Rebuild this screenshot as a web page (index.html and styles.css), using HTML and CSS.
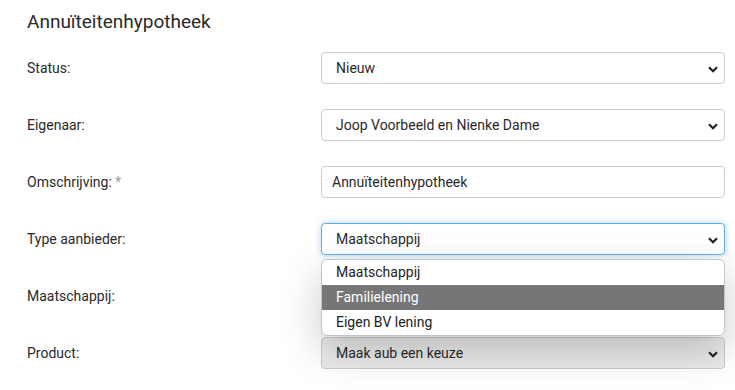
FILE: index.html
```html
<!DOCTYPE html>
<html lang="nl">
<head>
<meta charset="utf-8">
<title>Annuïteitenhypotheek</title>
<link rel="stylesheet" href="styles.css">
</head>
<body>
<div class="page">
  <h1 class="title">Annuïteitenhypotheek</h1>
  <form class="form">
    <div class="row">
      <label class="label">Status:</label>
      <div class="field">
        <div class="select"><span>Nieuw</span>
          <svg class="chev" width="10" height="7" viewBox="0 0 10 7"><path d="M1 1.2 L5 5.2 L9 1.2" fill="none" stroke="#222" stroke-width="2.2"/></svg>
        </div>
      </div>
    </div>
    <div class="row">
      <label class="label">Eigenaar:</label>
      <div class="field">
        <div class="select"><span>Joop Voorbeeld en Nienke Dame</span>
          <svg class="chev" width="10" height="7" viewBox="0 0 10 7"><path d="M1 1.2 L5 5.2 L9 1.2" fill="none" stroke="#222" stroke-width="2.2"/></svg>
        </div>
      </div>
    </div>
    <div class="row">
      <label class="label">Omschrijving: <span class="req">*</span></label>
      <div class="field">
        <div class="input">Annuïteitenhypotheek</div>
      </div>
    </div>
    <div class="row">
      <label class="label">Type aanbieder:</label>
      <div class="field">
        <div class="select focus"><span>Maatschappij</span>
          <svg class="chev" width="10" height="7" viewBox="0 0 10 7"><path d="M1 1.2 L5 5.2 L9 1.2" fill="none" stroke="#222" stroke-width="2.2"/></svg>
        </div>
        <ul class="dropdown">
          <li class="opt">Maatschappij</li>
          <li class="opt active">Familielening</li>
          <li class="opt">Eigen BV lening</li>
        </ul>
      </div>
    </div>
    <div class="row">
      <label class="label">Maatschappij:</label>
      <div class="field">
        <div class="select"><span></span></div>
      </div>
    </div>
    <div class="row">
      <label class="label">Product:</label>
      <div class="field">
        <div class="select disabled"><span>Maak aub een keuze</span>
          <svg class="chev" width="10" height="7" viewBox="0 0 10 7"><path d="M1 1.2 L5 5.2 L9 1.2" fill="none" stroke="#222" stroke-width="2.2"/></svg>
        </div>
      </div>
    </div>
  </form>
</div>
</body>
</html>
```
FILE: styles.css
```css
* { box-sizing: border-box; }
html, body { margin: 0; padding: 0; background: #fff; }
body {
  font-family: Roboto, "Liberation Sans", Arial, sans-serif;
  color: #2a2a2a;
  font-size: 14px;
  overflow: hidden;
}
.page {
  padding: 10px 10px 0 27px;
}
.title {
  margin: 0 0 18px 0;
  font-size: 19px;
  font-weight: 400;
  line-height: 24px;
  color: #2a2a2a;
}
.form { margin: 0; }
.row {
  display: grid;
  grid-template-columns: 294px 404px;
  align-items: center;
  margin-bottom: 25px;
}
.label {
  font-size: 14px;
  color: #2a2a2a;
}
.req { color: #999; font-size: 14px; }
.field { position: relative; }
.select, .input {
  height: 32px;
  border: 1px solid #ccc;
  border-radius: 4px;
  background: #fff;
  display: flex;
  align-items: center;
  font-size: 14px;
  color: #2a2a2a;
  position: relative;
}
.select { padding-left: 14px; }
.input { padding-left: 10px; }
.chev {
  position: absolute;
  right: 6px;
  top: 13px;
}
.select.focus {
  border-color: #66afe9;
  box-shadow: 0 0 6px rgba(102, 175, 233, 0.55);
}
.select.disabled {
  background: #ebebeb;
}
.dropdown {
  position: absolute;
  top: 36px;
  left: 0;
  right: 0;
  margin: 0;
  padding: 0;
  list-style: none;
  background: #fff;
  border: 1px solid #c4c4c4;
  border-radius: 6px;
  overflow: hidden;
  z-index: 5;
  box-shadow: 0 14px 40px rgba(0, 0, 0, 0.22);
}
.opt {
  height: 25px;
  line-height: 25px;
  padding-left: 14px;
  font-size: 14px;
  color: #222;
}
.opt.active {
  background: #767676;
  color: #fff;
}
```
